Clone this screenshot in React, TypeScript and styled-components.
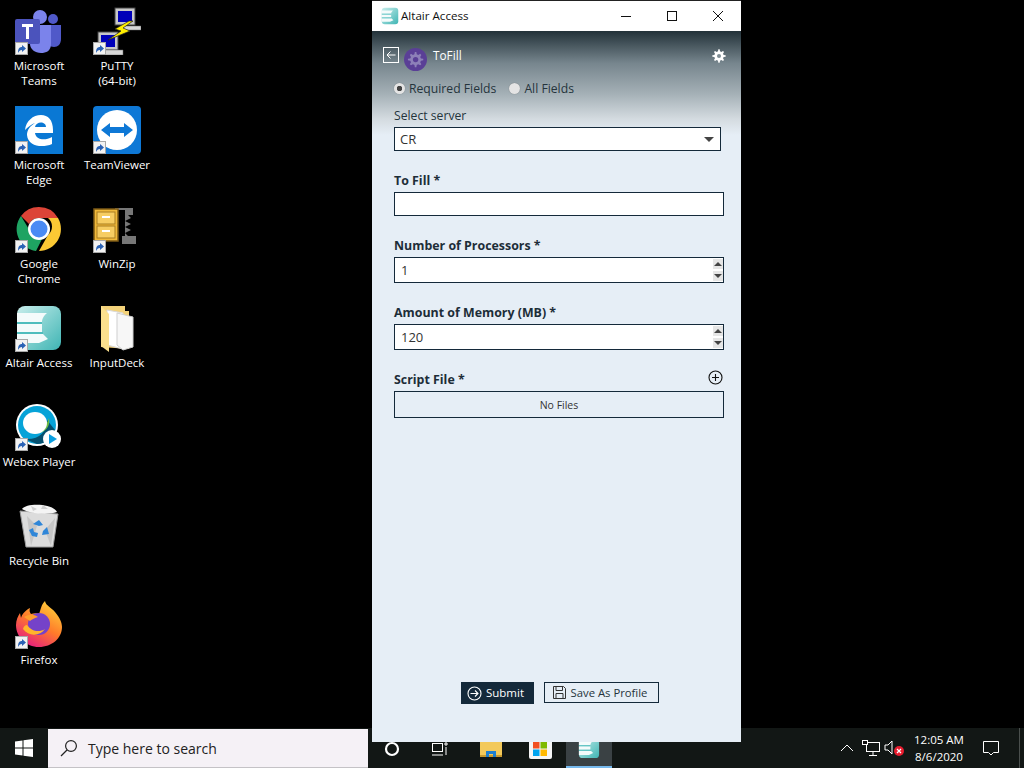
import styled, { createGlobalStyle } from "styled-components";
import type { ReactNode } from "react";

//* global page reset
const GlobalStyle = createGlobalStyle`
  html, body {
    margin: 0;
    padding: 0;
    background: #000;
  }
  * {
    box-sizing: border-box;
  }
`;

const UI_FONT = `"Open Sans", "Noto Sans", sans-serif`;

//* desktop icon drawings
const TeamsIcon = () => (
  <svg width="48" height="48" viewBox="0 0 48 48">
    <g transform="translate(0 3)">
      <circle cx="25" cy="7" r="7" fill="#7b83eb" />
      <circle cx="38" cy="9" r="5" fill="#5059c9" />
      <path d="M33 15h13v14c0 5-3 8-7 8-2 0-4-1-6-2z" fill="#5059c9" />
      <path d="M15 15h21v19c0 7-5 9-10 9-6 0-11-4-11-9z" fill="#7b83eb" />
      <rect x="0" y="9" width="25" height="25" rx="2" fill="#4b53bc" />
      <path d="M7 14h11v3h-4v12h-3V17H7z" fill="#fff" />
    </g>
  </svg>
);

const PuttyIcon = () => (
  <svg width="48" height="48" viewBox="0 0 48 48">
    <g transform="translate(0 1)">
      <rect x="22" y="0" width="20" height="17" fill="#c8c8c8" stroke="#444" />
      <rect x="25" y="3" width="14" height="11" fill="#0000b8" />
      <path d="M28 18h20v4H26z" fill="#d8d8d8" stroke="#666" strokeWidth="0.5" />
      <rect x="5" y="24" width="20" height="18" fill="#c8c8c8" stroke="#444" />
      <rect x="8" y="27" width="14" height="12" fill="#0000b8" />
      <path d="M10 42h20v5H8z" fill="#d8d8d8" stroke="#666" strokeWidth="0.5" />
      <path d="M36 13l-14 8 6 2-13 9 22-9-7-3 10-7z" fill="#ffee00" stroke="#222" strokeWidth="0.7" />
    </g>
  </svg>
);

const EdgeIcon = () => (
  <svg width="48" height="48" viewBox="0 0 48 48">
    <rect width="48" height="48" fill="#0a78d4" />
    <path
      d="M10 24C11 15 18 9 26 9c7 0 12 5 12 15v3H20c1 7 10 8 17 4v7c-9 4-24 3-25-9 0-5 3-9 8-12-3 1-7 4-10 7zM20 21h11c0-6-10-6-11 0z"
      fill="#fff"
    />
  </svg>
);

const TeamViewerIcon = () => (
  <svg width="48" height="48" viewBox="0 0 48 48">
    <rect width="48" height="48" rx="4" fill="#0e78d6" />
    <circle cx="24" cy="24" r="20" fill="#fff" />
    <path d="M8 24l9-7v4h14v-4l9 7-9 7v-4H17v4z" fill="#0e78d6" />
  </svg>
);

const ChromeIcon = () => (
  <svg width="48" height="48" viewBox="0 0 48 48">
    <path d="M24 2a22 22 0 0 1 19 11H24a11 11 0 0 0-10 6L6 11A22 22 0 0 1 24 2z" fill="#dc4437" />
    <path d="M43 13a22 22 0 0 1-19 33l9-16a11 11 0 0 0 0-17z" fill="#fcc934" />
    <path d="M6 11l9 15a11 11 0 0 0 12 8l-6 12A22 22 0 0 1 6 11z" fill="#1ea362" />
    <circle cx="24" cy="24" r="11" fill="#fff" />
    <circle cx="24" cy="24" r="8.5" fill="#4a8af4" />
  </svg>
);

const WinZipIcon = () => (
  <svg width="48" height="48" viewBox="0 0 48 48">
    <path d="M22 3h18v7h-5l3 3-6 3 6 3-6 3 6 3-6 3 3 3h8v8h-14v-8h3v-26h-10z" fill="#777" />
    <rect x="1" y="4" width="24" height="32" fill="#f0b93a" stroke="#7c5a16" strokeWidth="1.5" />
    <rect x="4" y="7" width="18" height="12" fill="#f7cd62" stroke="#a97f22" />
    <rect x="4" y="21" width="18" height="12" fill="#f7cd62" stroke="#a97f22" />
    <rect x="9" y="11" width="8" height="2" fill="#fff" />
    <rect x="9" y="25" width="8" height="2" fill="#fff" />
  </svg>
);

const AltairIcon = ({ size = 48 }: { size?: number }) => (
  <svg width={size} height={size} viewBox="0 0 48 48">
    <defs>
      <linearGradient id="altairFill" x1="0" x2="1" y1="0" y2="1">
        <stop offset="0" stopColor="#c9eeec" />
        <stop offset="1" stopColor="#3fb5b4" />
      </linearGradient>
    </defs>
    <rect x="2" y="2" width="44" height="44" rx="8" fill="url(#altairFill)" />
    <path d="M2 9h30c-4 3-5 7-5 9H2zM2 20h25v8H2zM2 30h26l5 5-9 4H2z" fill="#f4fbfb" />
    <path d="M2 18h25v2H2zM2 28h26v2H2z" fill="#4fbdbd" />
  </svg>
);

const FolderIcon = () => (
  <svg width="48" height="48" viewBox="0 0 48 48">
    <path d="M8 2h24v5h4v38l-28-2z" fill="#f3d27a" />
    <path d="M14 6l16 3v36l-16-4z" fill="#fff" stroke="#d9d9d9" />
    <path d="M24 9l16 4v30l-10 3-6-5z" fill="#f7f7f7" stroke="#cfcfcf" />
    <path d="M8 2l8 8v38L8 42z" fill="#fbe08e" />
  </svg>
);

const WebexIcon = () => (
  <svg width="48" height="48" viewBox="0 0 48 48">
    <circle cx="22" cy="22" r="21" fill="#fff" />
    <circle cx="22" cy="22" r="19" fill="#07a3d8" />
    <path d="M22 41a19 19 0 0 0 18-14l-8-10c0 12-8 20-22 19z" fill="#06506f" />
    <path d="M34 15c2 10-6 17-16 15 7 0 13-6 16-15z" fill="#6cbb44" />
    <ellipse cx="20" cy="20" rx="12" ry="11" fill="#fff" />
    <circle cx="37" cy="36" r="9" fill="#fff" />
    <path d="M34 31l8 5-8 5z" fill="#0a9ee0" />
  </svg>
);

const RecycleIcon = () => (
  <svg width="48" height="48" viewBox="0 0 48 48">
    <path d="M5 9l38 3-5 33H11z" fill="#dcdcdc" stroke="#9c9c9c" />
    <path d="M12 14l10 10-6 20zM40 16l-10 12 6 16z" fill="#c6c6c6" />
    <path d="M7 7c4-6 30-6 35 3-8 3-28 2-35-3z" fill="#f4f4f4" />
    <path d="M16 4l6 3-4 2zM28 3l5 4-7 0z" fill="#cfcfcf" />
    <path d="M18 22l6-4 4 5-4 1zM32 25l2 7-7 1 1-4zM17 34l-3-6 4-2 1 4 4 1-1 4z" fill="#2f86d8" />
  </svg>
);

const FirefoxIcon = () => (
  <svg width="48" height="48" viewBox="0 0 48 48">
    <defs>
      <linearGradient id="foxBody" x1="0.8" x2="0.2" y1="0" y2="1">
        <stop offset="0" stopColor="#ffd43a" />
        <stop offset="0.5" stopColor="#ff7a2a" />
        <stop offset="1" stopColor="#e31587" />
      </linearGradient>
    </defs>
    <path
      d="M24 46C11 46 1 36 1 24c0-5 2-9 4-12l1 5c1-4 5-8 9-10-1 3 0 5 1 6 3-1 6-1 8 0C26 8 26 4 30 0c1 5 6 6 10 11 5 6 7 11 7 15 0 11-10 20-23 20z"
      fill="url(#foxBody)"
    />
    <circle cx="24" cy="23" r="11" fill="#7542c9" />
    <path d="M12 24c4 6 12 8 18 4-5 7-16 8-22 0 1-3 2-4 4-4z" fill="#ffb52c" />
    <path d="M9 16c5-3 10-3 14 0-3 1-6 2-8 4z" fill="#ff9d2c" />
  </svg>
);

//* small shared drawings
const ShortcutArrow = () => (
  <ShortcutBadge>
    <svg width="11" height="11" viewBox="0 0 11 11">
      <path d="M2 10c0-4 1-6 4-6V2l4 3.5L6 9V7C4 7 3 8 2 10z" fill="#2a62b5" />
    </svg>
  </ShortcutBadge>
);

const GearPath = "M24 4l4 0 1 6 4 2 5-3 3 3-3 5 2 4 6 1v4l-6 1-2 4 3 5-3 3-5-3-4 2-1 6h-4l-1-6-4-2-5 3-3-3 3-5-2-4-6-1v-4l6-1 2-4-3-5 3-3 5 3 4-2z";

const desktopColumns: { label: string[]; icon: ReactNode; plain?: boolean }[][] = [
  [
    { label: ["Microsoft", "Teams"], icon: <TeamsIcon /> },
    { label: ["Microsoft", "Edge"], icon: <EdgeIcon /> },
    { label: ["Google", "Chrome"], icon: <ChromeIcon /> },
    { label: ["Altair Access"], icon: <AltairIcon /> },
    { label: ["Webex Player"], icon: <WebexIcon /> },
    { label: ["Recycle Bin"], icon: <RecycleIcon />, plain: true },
    { label: ["Firefox"], icon: <FirefoxIcon /> },
  ],
  [
    { label: ["PuTTY", "(64-bit)"], icon: <PuttyIcon /> },
    { label: ["TeamViewer"], icon: <TeamViewerIcon /> },
    { label: ["WinZip"], icon: <WinZipIcon /> },
    { label: ["InputDeck"], icon: <FolderIcon />, plain: true },
  ],
];

/*
 * NumberField is a labelled input with the little spin buttons on the right
*/
const NumberField = ({ label, value }: { label: string; value: string }) => (
  <Field>
    <FieldLabel>{label}</FieldLabel>
    <InputBox $height={26}>
      <InputText>{value}</InputText>
      <SpinColumn>
        <SpinButton>
          <svg width="8" height="4" viewBox="0 0 8 4"><path d="M4 0L8 4H0z" fill="#444" /></svg>
        </SpinButton>
        <SpinButton>
          <svg width="8" height="4" viewBox="0 0 8 4"><path d="M0 0h8L4 4z" fill="#444" /></svg>
        </SpinButton>
      </SpinColumn>
    </InputBox>
  </Field>
);

const App = (): JSX.Element => {
  //* render
  return (
    <>
      <GlobalStyle />
      <Desktop>
        <IconArea>
          {desktopColumns.map((column, i) => (
            <IconColumn key={i}>
              {column.map((tile) => (
                <Tile key={tile.label.join(" ")}>
                  <TileIcon>
                    {tile.icon}
                    {!tile.plain && <ShortcutArrow />}
                  </TileIcon>
                  <TileLabel>
                    {tile.label.map((line) => (
                      <div key={line}>{line}</div>
                    ))}
                  </TileLabel>
                </Tile>
              ))}
            </IconColumn>
          ))}
        </IconArea>

        <Taskbar>
          <StartButton>
            <svg width="18" height="18" viewBox="0 0 18 18">
              <path d="M0 2.5L7.5 1.4V8.5H0zM8.500 1.200L18 0v8.500H8.500zM0 9.500h7.500v7.100L0 15.500zM8.500 9.500H18V18l-9.500-1.200z" fill="#fff" />
            </svg>
          </StartButton>
          <SearchBox>
            <svg width="18" height="18" viewBox="0 0 18 18" fill="none" stroke="#222" strokeWidth="1.2">
              <circle cx="11" cy="7" r="5.4" />
              <path d="M7 11l-6 6" />
            </svg>
            <SearchText>Type here to search</SearchText>
          </SearchBox>
          <TaskSlot>
            <svg width="16" height="16" viewBox="0 0 16 16" fill="none" stroke="#fff" strokeWidth="2.2">
              <circle cx="8" cy="8" r="6" />
            </svg>
          </TaskSlot>
          <TaskSlot>
            <svg width="16" height="14" viewBox="0 0 16 14" fill="none" stroke="#fff" strokeWidth="1">
              <rect x="0.500" y="1.500" width="10" height="8" />
              <path d="M0 13h11M13 1h2v2h-2zM14 5v8" />
            </svg>
          </TaskSlot>
          <TaskSlot $width={50} $offset={2}>
            <svg width="22" height="20" viewBox="0 0 22 20">
              <rect x="0" y="0" width="22" height="18" fill="#f3c95a" />
              <rect x="0" y="16" width="22" height="2" fill="#c99a2e" />
              <path d="M6 18v-6h10v6h-3v-3H9v3z" fill="#1e7fd0" />
            </svg>
          </TaskSlot>
          <TaskSlot>
            <StoreBag>
              <svg width="14" height="14" viewBox="0 0 14 14">
                <rect width="6.500" height="6.500" fill="#f25022" />
                <rect x="7.500" width="6.500" height="6.500" fill="#7fba00" />
                <rect y="7.500" width="6.500" height="6.500" fill="#00a4ef" />
                <rect x="7.500" y="7.500" width="6.500" height="6.500" fill="#ffb900" />
              </svg>
            </StoreBag>
          </TaskSlot>
          <TaskSlot $active $width={46} $offset={2}>
            <AltairIcon size={22} />
          </TaskSlot>

          <Tray>
            <TrayIcon>
              <svg width="14" height="8" viewBox="0 0 14 8" fill="none" stroke="#fff" strokeWidth="1">
                <path d="M1 7l6-6 6 6" />
              </svg>
            </TrayIcon>
            <TrayIcon>
              <svg width="18" height="18" viewBox="0 0 18 18" fill="none" stroke="#fff" strokeWidth="1">
                <rect x="4.500" y="3.500" width="13" height="9" />
                <rect x="0.500" y="1.500" width="5" height="4" fill="#111" />
                <path d="M11 13v3M7 16.500h8" />
              </svg>
            </TrayIcon>
            <TrayIcon>
              <svg width="22" height="18" viewBox="0 0 22 18">
                <path d="M1 6h3l4-4v13l-4-4H1z" fill="none" stroke="#fff" strokeWidth="1" />
                <circle cx="15" cy="12" r="5" fill="#e81c2e" />
                <path d="M13 10l4 4M17 10l-4 4" stroke="#fff" strokeWidth="1.200" />
              </svg>
            </TrayIcon>
            <Clock>
              <div>12:05 AM</div>
              <div>8/6/2020</div>
            </Clock>
            <TrayIcon>
              <svg width="18" height="18" viewBox="0 0 18 18" fill="none" stroke="#fff" strokeWidth="1">
                <path d="M1.500 2.500h15v11h-5L9 16l-2.500-2.500h-5z" />
              </svg>
            </TrayIcon>
            <ShowDesktop />
          </Tray>
        </Taskbar>

        <AppWindow>
          <TitleBar>
            <AltairIcon size={18} />
            <TitleText>Altair Access</TitleText>
            <WindowControls>
              <WindowControl>
                <svg width="12" height="12" viewBox="0 0 12 12"><path d="M1 6.500h10" stroke="#111" /></svg>
              </WindowControl>
              <WindowControl>
                <svg width="12" height="12" viewBox="0 0 12 12"><rect x="1.500" y="1.500" width="9" height="9" fill="none" stroke="#111" /></svg>
              </WindowControl>
              <WindowControl>
                <svg width="12" height="12" viewBox="0 0 12 12"><path d="M1 1l10 10M11 1L1 11" stroke="#111" /></svg>
              </WindowControl>
            </WindowControls>
          </TitleBar>

          <WindowBody>
            <HeaderRow>
              <BackButton>
                <svg width="10" height="10" viewBox="0 0 10 10" fill="none" stroke="#fff" strokeWidth="1">
                  <path d="M9.500 5H1M4.500 1.500L1 5l3.500 3.500" />
                </svg>
              </BackButton>
              <AppBadge>
                <svg width="23" height="23" viewBox="0 0 48 48">
                  <circle cx="24" cy="24" r="24" fill="#5a3f96" />
                  <g transform="translate(5 5) scale(0.8)">
                    <path d={GearPath} transform="translate(-2 0)" fill="#8d80b8" />
                    <circle cx="24" cy="24" r="7" fill="#5a3f96" />
                  </g>
                </svg>
              </AppBadge>
              <AppName>ToFill</AppName>
              <SettingsGear>
                <svg width="16" height="16" viewBox="0 0 48 48">
                  <path d={GearPath} transform="translate(-2 0)" fill="#fff" />
                  <circle cx="24" cy="24" r="6" fill="#7d8b92" />
                </svg>
              </SettingsGear>
            </HeaderRow>

            <FormArea>
              <RadioRow>
                <RadioOption>
                  <RadioDot $checked />
                  <RadioLabel>Required Fields</RadioLabel>
                </RadioOption>
                <RadioOption>
                  <RadioDot />
                  <RadioLabel>All Fields</RadioLabel>
                </RadioOption>
              </RadioRow>

              <ServerField>
                <ServerLabel>Select server</ServerLabel>
                <InputBox $height={24} $narrow>
                  <InputText>CR</InputText>
                  <SelectCaret />
                </InputBox>
              </ServerField>

              <Field>
                <FieldLabel>To Fill *</FieldLabel>
                <InputBox $height={24} />
              </Field>

              <NumberField label="Number of Processors *" value="1" />
              <NumberField label="Amount of Memory (MB) *" value="120" />

              <Field>
                <FieldHeader>
                  <FieldLabel>Script File *</FieldLabel>
                  <AddFileIcon width="15" height="15" viewBox="0 0 15 15" fill="none" stroke="#111" strokeWidth="1.100">
                    <circle cx="7.500" cy="7.500" r="6.500" />
                    <path d="M7.500 4v7M4 7.500h7" />
                  </AddFileIcon>
                </FieldHeader>
                <FileBox>No Files</FileBox>
              </Field>
            </FormArea>

            <Footer>
              <SubmitButton>
                <svg width="15" height="15" viewBox="0 0 15 15" fill="none" stroke="#fff" strokeWidth="1.100">
                  <circle cx="7.500" cy="7.500" r="6.500" />
                  <path d="M3.500 7.500h7.500M8 4.500l3 3-3 3" />
                </svg>
                <ButtonCaption>Submit</ButtonCaption>
              </SubmitButton>
              <SaveButton>
                <svg width="13" height="13" viewBox="0 0 13 13" fill="none" stroke="#333" strokeWidth="1">
                  <path d="M.5.500h10l2 2v10H.5z" />
                  <path d="M3 .500v4h6.500v-4M3 12.500V7.500h7v5" />
                </svg>
                <ButtonCaption>Save As Profile</ButtonCaption>
              </SaveButton>
            </Footer>
          </WindowBody>
        </AppWindow>
      </Desktop>
    </>
  );
};

export default App;

//lines below this point are styled-components logic

/*
 * Desktop is the full screen black canvas with the taskbar pinned at the bottom
*/
const Desktop = styled.div`
  position: relative;
  width: 1024px;
  height: 768px;
  overflow: hidden;
  background: #000;
  display: flex;
  flex-direction: column;
  font-family: ${UI_FONT};
`;

const IconArea = styled.div`
  flex: 1;
  display: flex;
  align-items: flex-start;
`;

const IconColumn = styled.div`
  width: 78px;
  display: flex;
  flex-direction: column;
`;

const Tile = styled.div`
  height: 99px;
  padding-top: 7px;
  display: flex;
  flex-direction: column;
  align-items: center;
`;

const TileIcon = styled.div`
  position: relative;
  width: 48px;
  height: 48px;
`;

const ShortcutBadge = styled.div`
  position: absolute;
  left: 0;
  bottom: 0;
  width: 13px;
  height: 13px;
  background: #f2f2f2;
  border: 1px solid #a8a8a8;
  display: flex;
  align-items: center;
  justify-content: center;
`;

const TileLabel = styled.div`
  margin-top: 3px;
  color: #fff;
  font-size: 11.5px;
  line-height: 15px;
  text-align: center;
  white-space: nowrap;
  text-shadow: 0 1px 2px rgba(0, 0, 0, 0.9);
`;

/*
 * Taskbar is the bottom strip; the app window overlaps its top edge
*/
const Taskbar = styled.div`
  height: 40px;
  flex-shrink: 0;
  display: flex;
  align-items: stretch;
  background: #121715;
`;

const StartButton = styled.div`
  width: 48px;
  display: flex;
  align-items: center;
  justify-content: center;
`;

const SearchBox = styled.div`
  width: 320px;
  margin-top: 1px;
  padding-left: 12px;
  display: flex;
  align-items: center;
  gap: 10px;
  background: #f5f1f6;
  border-bottom: 1px solid #c4c2c6;
`;

const SearchText = styled.span`
  font-size: 14px;
  color: #222;
`;

const TaskSlot = styled.div<{ $active?: boolean; $width?: number; $offset?: number }>`
  width: ${(p) => p.$width ?? 48}px;
  margin-left: ${(p) => p.$offset ?? 0}px;
  padding-top: 2px;
  display: flex;
  align-items: center;
  justify-content: center;
  background: ${(p) => (p.$active ? "#3a4144" : "transparent")};
  border-bottom: ${(p) => (p.$active ? "2px solid #76b9ed" : "none")};
`;

const StoreBag = styled.div`
  width: 23px;
  height: 20px;
  background: #f5f5f5;
  border-radius: 2px;
  display: flex;
  align-items: center;
  justify-content: center;
`;

const Tray = styled.div`
  margin-left: auto;
  display: flex;
  align-items: center;
  color: #fff;
`;

const TrayIcon = styled.div`
  width: 24px;
  display: flex;
  align-items: center;
  justify-content: center;
`;

const Clock = styled.div`
  width: 60px;
  margin: 0 10px 0 2px;
  text-align: center;
  font-size: 11.5px;
  line-height: 17px;
`;

const ShowDesktop = styled.div`
  width: 1px;
  height: 100%;
  margin-left: 16px;
  margin-right: 4px;
  background: #4a4f4d;
`;

/*
 * AppWindow is a floating window on the desktop
*/
const AppWindow = styled.div`
  position: absolute;
  left: 372px;
  top: 0;
  width: 369px;
  height: 742px;
  display: flex;
  flex-direction: column;
  background: #e6eef6;
  border-top: 1px solid #222;
`;

const TitleBar = styled.div`
  height: 30px;
  flex-shrink: 0;
  padding-left: 9px;
  display: flex;
  align-items: center;
  background: #fff;
`;

const TitleText = styled.span`
  margin: 0 0 2px 2px;
  font-size: 11.6px;
  color: #111;
`;

const WindowControls = styled.div`
  margin-left: auto;
  display: flex;
`;

const WindowControl = styled.div`
  width: 46px;
  height: 30px;
  display: flex;
  align-items: center;
  justify-content: center;
`;

const WindowBody = styled.div`
  flex: 1;
  display: flex;
  flex-direction: column;
  background: linear-gradient(#233239 0, #76858d 32px, #a3afb5 62px, #d4dbe0 88px, #e6eef6 104px);
`;

const HeaderRow = styled.div`
  height: 40px;
  padding: 16px 14px 0 11px;
  display: flex;
  align-items: flex-start;
`;

const BackButton = styled.div`
  width: 16px;
  height: 16px;
  border: 1px solid #fff;
  display: flex;
  align-items: center;
  justify-content: center;
`;

const AppBadge = styled.div`
  width: 23px;
  height: 23px;
  margin: 1px 0 0 5px;
`;

const AppName = styled.span`
  margin-left: 6px;
  font-size: 11.8px;
  line-height: 17px;
  color: #fff;
`;

const SettingsGear = styled.div`
  margin-left: auto;
`;

const FormArea = styled.div`
  padding: 8px 17px 0 22px;
  display: flex;
  flex-direction: column;
`;

const RadioRow = styled.div`
  height: 18px;
  display: flex;
  align-items: center;
  gap: 13px;
`;

const RadioOption = styled.div`
  display: flex;
  align-items: center;
  gap: 4px;
`;

const RadioDot = styled.div<{ $checked?: boolean }>`
  width: 11px;
  height: 11px;
  border-radius: 50%;
  background: ${(p) =>
    p.$checked
      ? "radial-gradient(circle, #444 0 2.5px, #e4e4e4 3px)"
      : "#e4e4e4"};
  box-shadow: 0 0 1px rgba(0, 0, 0, 0.4);
`;

const RadioLabel = styled.span`
  font-size: 12.2px;
  color: #25343c;
`;

const ServerField = styled.div`
  margin-top: 10px;
  display: flex;
  flex-direction: column;
`;

const ServerLabel = styled.label`
  height: 20px;
  font-size: 12.2px;
  line-height: 17px;
  color: #25343c;
`;

const Field = styled.div`
  margin-top: 20px;
  display: flex;
  flex-direction: column;
`;

const FieldHeader = styled.div`
  display: flex;
  align-items: flex-start;
  justify-content: space-between;
`;

const AddFileIcon = styled.svg`
  margin-right: 1px;
`;

const FieldLabel = styled.label`
  height: 21px;
  font-size: 12.4px;
  line-height: 19px;
  font-weight: 700;
  color: #1d2d38;
`;

const InputBox = styled.div<{ $height: number; $narrow?: boolean }>`
  width: ${(p) => (p.$narrow ? "327px" : "330px")};
  height: ${(p) => p.$height}px;
  padding-left: ${(p) => (p.$narrow ? "5px" : "6px")};
  display: flex;
  align-items: center;
  justify-content: space-between;
  background: #fff;
  border: 1px solid #14293a;
`;

const InputText = styled.span`
  font-size: 13px;
  color: #333;
`;

const SpinColumn = styled.div`
  width: 10px;
  height: 100%;
  padding: 1px 0;
  display: flex;
  flex-direction: column;
  justify-content: space-between;
`;

const SpinButton = styled.div`
  height: 10px;
  display: flex;
  align-items: center;
  justify-content: center;
  background: #e6e6e6;
`;

const SelectCaret = styled.div`
  width: 0;
  height: 0;
  margin-right: 6px;
  border-left: 5px solid transparent;
  border-right: 5px solid transparent;
  border-top: 5px solid #444;
`;

const FileBox = styled.div`
  width: 330px;
  height: 27px;
  display: flex;
  align-items: center;
  justify-content: center;
  font-size: 10.5px;
  color: #333;
  border: 1px solid #14293a;
`;

const Footer = styled.div`
  margin-top: auto;
  padding: 0 0 38px 6px;
  display: flex;
  align-items: flex-start;
  justify-content: center;
  gap: 10px;
`;

const ButtonCaption = styled.span`
  margin-bottom: 1px;
`;

const SubmitButton = styled.div`
  width: 73px;
  height: 22px;
  padding-right: 3px;
  display: flex;
  align-items: center;
  justify-content: center;
  gap: 4px;
  font-size: 11.5px;
  color: #fff;
  background: #14293a;
`;

const SaveButton = styled.div`
  width: 115px;
  height: 21px;
  padding-right: 2px;
  display: flex;
  align-items: center;
  justify-content: center;
  gap: 5px;
  font-size: 11.3px;
  color: #25343c;
  border: 1px solid #14293a;
`;
